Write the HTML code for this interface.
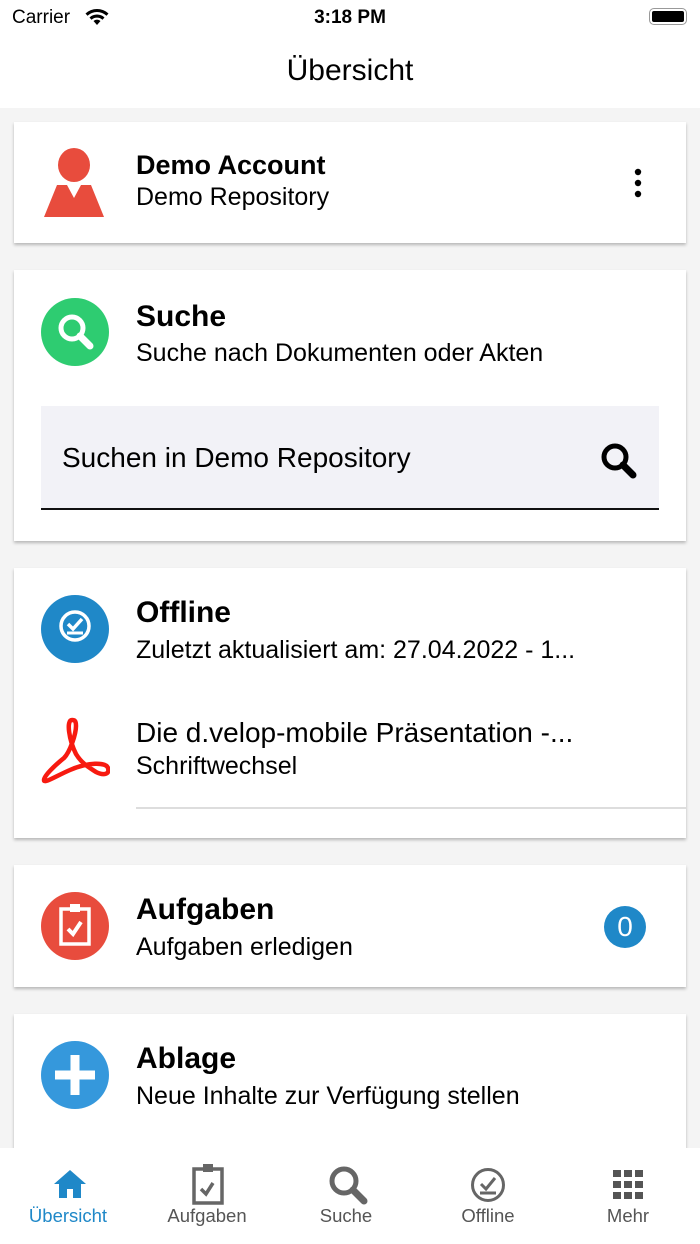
<html><head><style>
body{margin:0;width:700px;height:1244px;background:#f4f4f4;font-family:"Liberation Sans",sans-serif;position:relative;overflow:hidden;color:#000}
.a{position:absolute}
.card{position:absolute;left:14px;width:672px;background:#fff;box-shadow:0 2px 3px rgba(0,0,0,.25)}
.t{position:absolute;left:122px;font-size:28px;font-weight:bold;white-space:nowrap}
.s{position:absolute;left:122px;font-size:25px;white-space:nowrap}
.c{position:absolute;left:27px;width:68px;height:68px;border-radius:50%}
.tab{position:absolute;top:1205px;font-size:18.5px;color:#555;width:140px;text-align:center}
</style></head><body>
<div class="a" style="left:0;top:0;width:700px;height:108px;background:#fff"></div>
<div class="a" style="left:12px;top:7px;font-size:19px">Carrier</div>
<svg class="a" style="left:84px;top:7px" width="26" height="20" viewBox="0 0 26 20"><path d="M13 18l-3.5-4a5 5 0 017 0zM5.5 10.5a11 11 0 0115 0l-2 2.3a8 8 0 00-11 0zM1.5 6.5a17 17 0 0123 0l-2 2.2a14 14 0 00-19 0z" fill="#000"/></svg>
<div class="a" style="left:0;width:700px;top:7px;text-align:center;font-size:19px;font-weight:bold">3:18 PM</div>
<div class="a" style="left:649px;top:8px;width:38px;height:17px;border:1.5px solid #999;border-radius:5px;box-sizing:border-box;padding:2px"><div style="background:#000;width:100%;height:100%;border-radius:2px"></div></div>
<div class="a" style="left:0;width:700px;top:54px;text-align:center;font-size:30px">Übersicht</div>

<div class="card" style="top:122px;height:121px">
<svg class="a" style="left:30px;top:26px" width="60" height="70" viewBox="0 0 60 70"><ellipse cx="30" cy="17" rx="16" ry="17" fill="#e84c3d"/><path d="M13 37h10l7 13 7-13h10l13 32H0z" fill="#e84c3d"/></svg>
<div class="t" style="top:28px;font-size:27px">Demo Account</div>
<div class="s" style="top:61px">Demo Repository</div>
<svg class="a" style="left:618px;top:46px" width="12" height="30"><circle cx="6" cy="4" r="3.2"/><circle cx="6" cy="15" r="3.2"/><circle cx="6" cy="26" r="3.2"/></svg>
</div>

<div class="card" style="top:270px;height:271px">
<div class="c" style="top:28px;background:#2ecc71"></div>
<svg class="a" style="left:27px;top:28px" width="68" height="68"><circle cx="31" cy="30" r="11" fill="none" stroke="#fff" stroke-width="5"/><path d="M39 38l10 10" stroke="#fff" stroke-width="7" stroke-linecap="round"/></svg>
<div class="t" style="top:30px;font-size:30px">Suche</div>
<div class="s" style="top:69px">Suche nach Dokumenten oder Akten</div>
<div class="a" style="left:27px;top:136px;width:618px;height:102px;background:#f2f2f7;border-bottom:2px solid #111"></div>
<div class="a" style="left:48px;top:172px;font-size:28px">Suchen in Demo Repository</div>
<svg class="a" style="left:584px;top:170px" width="42" height="42"><circle cx="17" cy="17" r="11" fill="none" stroke="#000" stroke-width="5"/><path d="M25 25l10 10" stroke="#000" stroke-width="7" stroke-linecap="round"/></svg>
</div>

<div class="card" style="top:568px;height:270px">
<div class="c" style="top:27px;background:#1f88c8"></div>
<svg class="a" style="left:27px;top:27px" width="68" height="68"><circle cx="34" cy="31" r="14" fill="none" stroke="#fff" stroke-width="3.5"/><path d="M27 29l5 5 9-10" fill="none" stroke="#fff" stroke-width="3.5"/><path d="M26 38h16" stroke="#fff" stroke-width="3"/></svg>
<div class="t" style="top:28px;font-size:30px">Offline</div>
<div class="s" style="top:68px">Zuletzt aktualisiert am: 27.04.2022 - 1...</div>
<svg class="a" style="left:26px;top:148px" width="70" height="70" viewBox="0 0 70 70"><path d="M32 4c-6 0-3 20 4 34 6 10 14 14 20 18 8 4 14 2 12-4-2-6-20-6-38 2C16 60 4 68 4 64c0-4 10-14 20-22 6-6 12-24 12-32 0-6-2-6-4-6z" fill="none" stroke="#f71a10" stroke-width="4.5" stroke-linejoin="round"/></svg>
<div class="s" style="top:149px;font-size:28px">Die d.velop-mobile Präsentation -...</div>
<div class="s" style="top:184px">Schriftwechsel</div>
<div class="a" style="left:122px;top:239px;width:550px;height:2px;background:#ddd"></div>
</div>

<div class="card" style="top:865px;height:122px">
<div class="c" style="top:27px;background:#e84c3d"></div>
<svg class="a" style="left:27px;top:27px" width="68" height="68"><rect x="20" y="17" width="28" height="35" fill="none" stroke="#fff" stroke-width="3.5"/><rect x="29" y="12" width="10" height="8" fill="#fff"/><path d="M27 37l5 5 8-12" fill="none" stroke="#fff" stroke-width="4"/></svg>
<div class="t" style="top:28px;font-size:30px">Aufgaben</div>
<div class="s" style="top:68px">Aufgaben erledigen</div>
<div class="a" style="left:590px;top:41px;width:42px;height:42px;border-radius:50%;background:#1f88c8;color:#fff;font-size:28px;text-align:center;line-height:42px">0</div>
</div>

<div class="card" style="top:1014px;height:200px">
<div class="c" style="top:27px;background:#3598dc"></div>
<svg class="a" style="left:27px;top:27px" width="68" height="68"><path d="M34 14v40M14 34h40" stroke="#fff" stroke-width="9"/></svg>
<div class="t" style="top:28px;font-size:30px">Ablage</div>
<div class="s" style="top:68px">Neue Inhalte zur Verfügung stellen</div>
</div>

<div class="a" style="left:0;top:1148px;width:700px;height:96px;background:#fff"></div>
<svg class="a" style="left:52px;top:1168px" width="36" height="32"><path d="M18 2L2 16h5v14h8v-9h6v9h8V16h5z" fill="#1f88c8"/></svg>
<div class="tab" style="left:-2px;color:#1f88c8">Übersicht</div>
<svg class="a" style="left:190px;top:1163px" width="36" height="42"><rect x="4" y="6" width="28" height="34" fill="none" stroke="#666" stroke-width="3.5"/><rect x="13" y="1" width="10" height="8" fill="#666"/><path d="M11 26l5 5 7-11" fill="none" stroke="#666" stroke-width="3.5"/></svg>
<div class="tab" style="left:137px">Aufgaben</div>
<svg class="a" style="left:326px;top:1163px" width="44" height="44"><circle cx="18" cy="18" r="12" fill="none" stroke="#666" stroke-width="5"/><path d="M27 27l11 11" stroke="#666" stroke-width="7" stroke-linecap="round"/></svg>
<div class="tab" style="left:276px">Suche</div>
<svg class="a" style="left:469px;top:1166px" width="38" height="38"><circle cx="19" cy="19" r="15.5" fill="none" stroke="#666" stroke-width="3"/><path d="M12 18l5 5 9-11" fill="none" stroke="#666" stroke-width="3"/><path d="M11 27h16" stroke="#666" stroke-width="3"/></svg>
<div class="tab" style="left:418px">Offline</div>
<svg class="a" style="left:613px;top:1170px" width="32" height="30"><g fill="#555"><rect x="0" y="0" width="8" height="7"/><rect x="11" y="0" width="8" height="7"/><rect x="22" y="0" width="8" height="7"/><rect x="0" y="11" width="8" height="7"/><rect x="11" y="11" width="8" height="7"/><rect x="22" y="11" width="8" height="7"/><rect x="0" y="22" width="8" height="7"/><rect x="11" y="22" width="8" height="7"/><rect x="22" y="22" width="8" height="7"/></g></svg>
<div class="tab" style="left:558px">Mehr</div>
</body></html>
